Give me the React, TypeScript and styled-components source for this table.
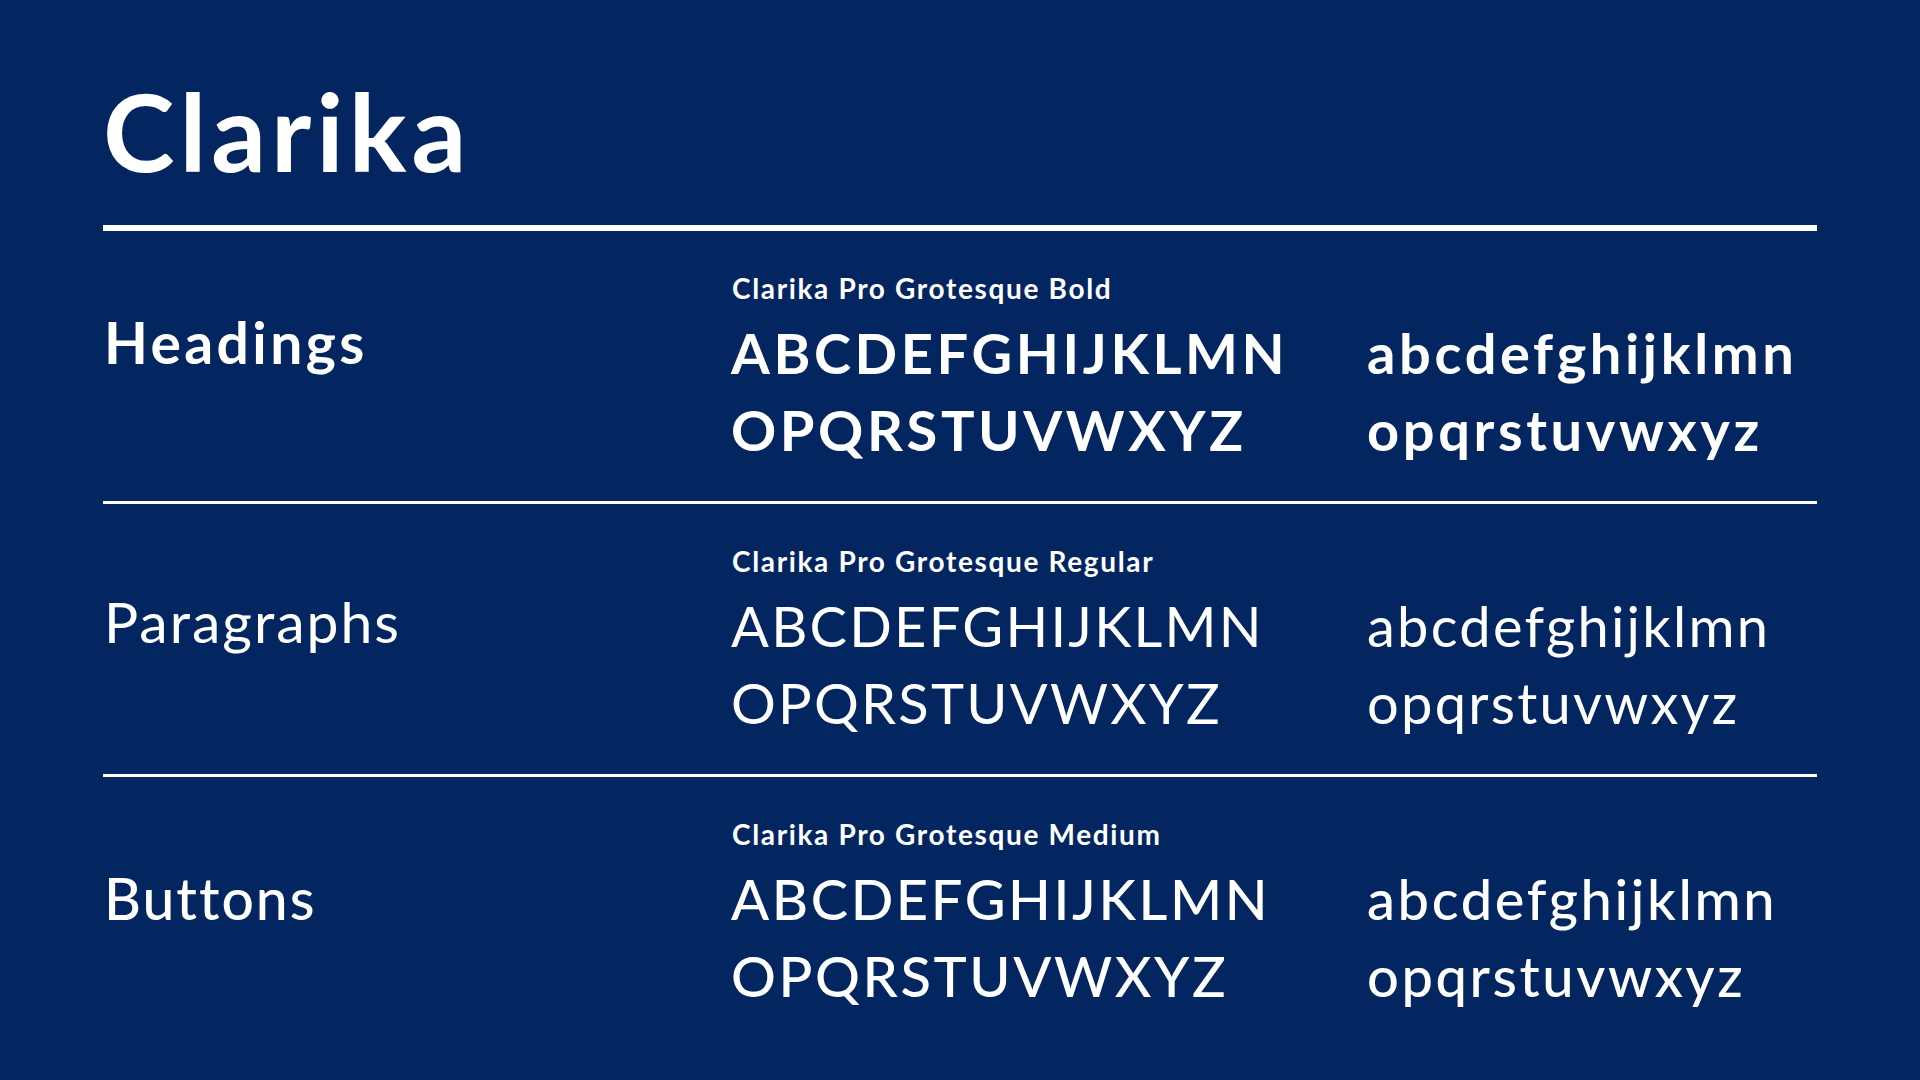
import React from "react";
import styled, { createGlobalStyle } from "styled-components";

type Weight = 300 | 400 | 500 | 600 | 700;

interface Row {
  label: string;
  labelWeight: Weight;
  labelOffset: number;
  labelSpacing: number;
  face: string;
  weight: Weight;
  spacing: number;
}

const rows: Row[] = [
  {
    label: "Headings",
    labelWeight: 700,
    labelOffset: 37,
    labelSpacing: 3.4,
    face: "Clarika Pro Grotesque Bold",
    weight: 700,
    spacing: 3.6
  },
  {
    label: "Paragraphs",
    labelWeight: 400,
    labelOffset: 43,
    labelSpacing: 2,
    face: "Clarika Pro Grotesque Regular",
    weight: 400,
    spacing: 2.25
  },
  {
    label: "Buttons",
    labelWeight: 500,
    labelOffset: 47,
    labelSpacing: 2,
    face: "Clarika Pro Grotesque Medium",
    weight: 500,
    spacing: 2.6
  }
];

const GlobalStyle = createGlobalStyle`
  html, body {
    margin: 0;
    padding: 0;
    background: #032560;
  }
  body {
    font-family: Lato, "Open Sans", sans-serif;
    color: #fff;
  }
`;

const App: React.FC = () => {
  return (
    <>
      <GlobalStyle />
      <Page>
        <Title>Clarika</Title>
        <Divider thick />
        {rows.map((row, i) => (
          <React.Fragment key={row.label}>
            {i > 0 && <Divider />}
            <Section>
              <Label
                weight={row.labelWeight}
                offset={row.labelOffset}
                spacing={row.labelSpacing}
              >
                {row.label}
              </Label>
              <FaceName>{row.face}</FaceName>
              <Specimen weight={row.weight} spacing={row.spacing} area="upper">
                ABCDEFGHIJKLMN
                <br />
                OPQRSTUVWXYZ
              </Specimen>
              <Specimen weight={row.weight} spacing={row.spacing} area="lower">
                abcdefghijklmn
                <br />
                opqrstuvwxyz
              </Specimen>
            </Section>
          </React.Fragment>
        ))}
      </Page>
    </>
  );
};

export default App;

const Page = styled.div`
  box-sizing: border-box;
  min-height: 1080px;
  padding: 65px 103px 0;
  background: #032560;
  color: #fff;
`;

const Title = styled.h1`
  margin: 0;
  font-family: Lato, sans-serif;
  font-weight: 700;
  font-size: 108px;
  line-height: 130px;
  letter-spacing: 5px;
`;

const Divider = styled.div<{ thick?: boolean }>`
  width: 1714px;
  height: ${props => (props.thick ? "6px" : "3px")};
  margin-top: ${props => (props.thick ? "30px" : "0")};
  background: #fff;
`;

const Section = styled.section`
  display: grid;
  grid-template-columns: 628px 636px 1fr;
  grid-template-rows: auto auto;
  grid-template-areas:
    "label face ."
    "label upper lower";
  row-gap: 9px;
  box-sizing: border-box;
  height: 270px;
  padding-top: 40px;
  align-content: start;
`;

const Label = styled.div<{ weight: Weight; offset: number; spacing: number }>`
  grid-area: label;
  margin-top: ${props => props.offset}px;
  padding-left: 1px;
  font-family: Lato, sans-serif;
  font-size: 57px;
  line-height: 68px;
  font-weight: ${props => props.weight};
  letter-spacing: ${props => props.spacing}px;
`;

const FaceName = styled.div`
  grid-area: face;
  padding-left: 1px;
  font-family: Lato, sans-serif;
  font-size: 28px;
  line-height: 34px;
  font-weight: 700;
  letter-spacing: 1.65px;
`;

const Specimen = styled.div<{ weight: Weight; spacing: number; area: string }>`
  grid-area: ${props => props.area};
  font-family: Lato, sans-serif;
  font-size: 56px;
  line-height: 77px;
  font-weight: ${props => props.weight};
  letter-spacing: ${props => props.spacing}px;
  white-space: nowrap;
`;
